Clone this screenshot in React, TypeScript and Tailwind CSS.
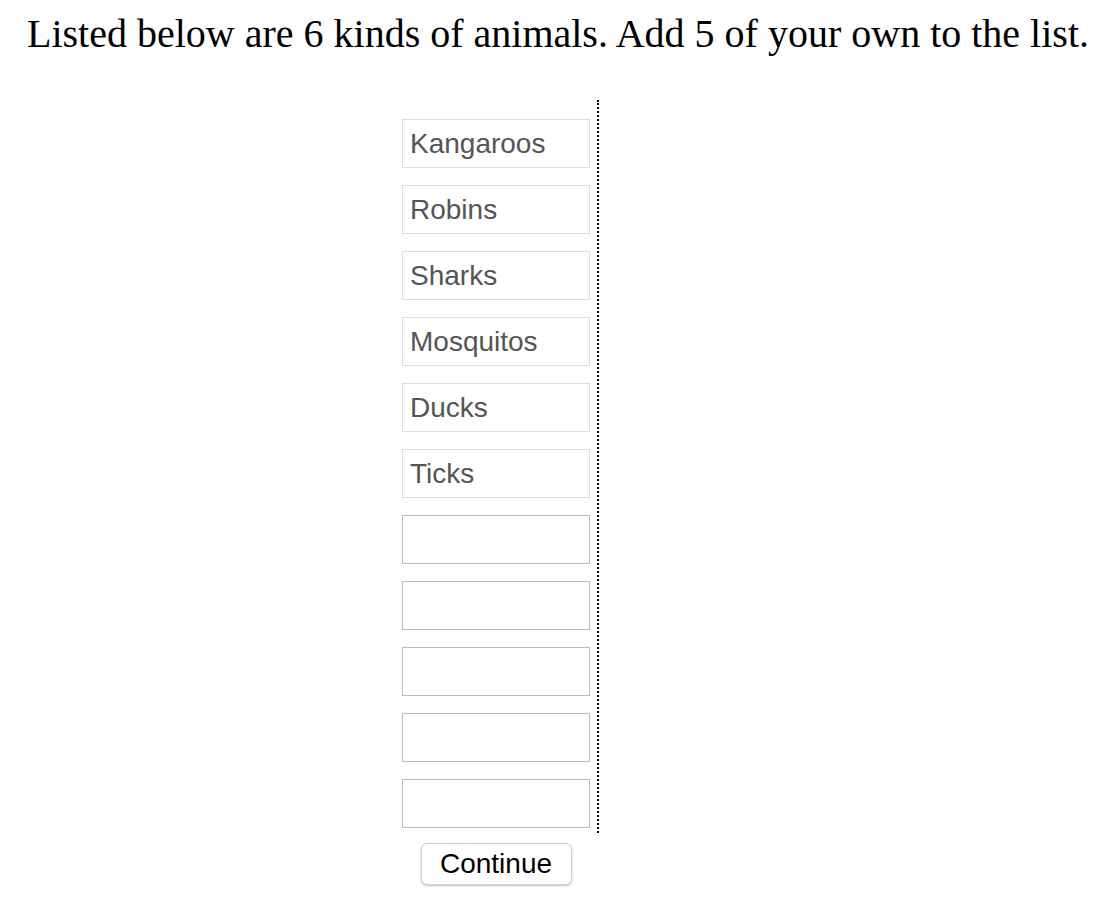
import React from "react";

const filled = ["Kangaroos", "Robins", "Sharks", "Mosquitos", "Ducks", "Ticks"];

export default function App() {
  return (
    <div className="min-h-[914px] bg-white">
      <h1 className="pt-[10px] text-center text-[40px] leading-[48px] text-black font-['Liberation_Serif','Times_New_Roman',serif] font-normal">
        Listed below are 6 kinds of animals. Add 5 of your own to the list.
      </h1>
      <div className="pl-[402px] pt-[42px]">
        <div className="flex w-[197px] flex-col gap-[17px] border-r-2 border-dotted border-black pt-[19px] pb-[5px]">
          {filled.map((a) => (
            <input
              key={a}
              defaultValue={a}
              className="h-[49px] w-[188px] border border-[#dddddd] bg-white px-[7px] text-[28px] text-[#555555] outline-none font-['Liberation_Sans',Arial,sans-serif]"
            />
          ))}
          {[0, 1, 2, 3, 4].map((i) => (
            <input
              key={i}
              className="h-[49px] w-[188px] border border-[#bbbbbb] bg-white px-[7px] text-[28px] text-[#555555] outline-none font-['Liberation_Sans',Arial,sans-serif]"
            />
          ))}
        </div>
        <div className="w-[188px] flex justify-center pt-[10px]">
          <button className="h-[42px] w-[151px] rounded-[6px] border border-[#d0d0d0] bg-white text-[28px] leading-[40px] text-black shadow-[0_1px_2px_rgba(0,0,0,0.25)] font-['Liberation_Sans',Arial,sans-serif]">
            Continue
          </button>
        </div>
      </div>
    </div>
  );
}
